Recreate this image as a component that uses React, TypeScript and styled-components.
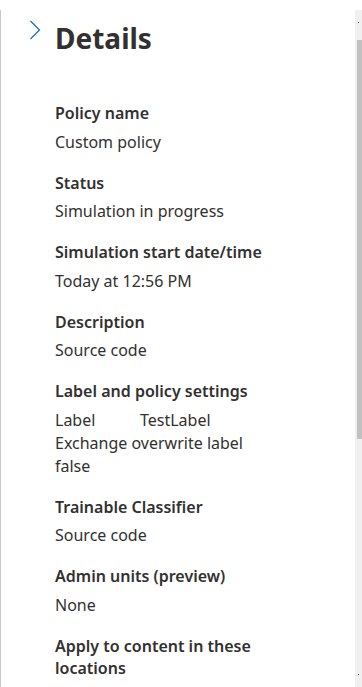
import styled, { createGlobalStyle } from "styled-components";

const Global = createGlobalStyle`
  html, body {
    margin: 0;
    padding: 0;
    background: #ffffff;
  }
  body {
    font-family: "Segoe UI", "Noto Sans", "Open Sans", sans-serif;
    color: #323130;
    overflow: hidden;
  }
`;

const Page = styled.div`
  width: 362px;
  height: 687px;
  padding-top: 10px;
  box-sizing: border-box;
`;

const Panel = styled.div`
  display: flex;
  height: 677px;
  border-left: 1px solid #c8c8c8;
  overflow: hidden;
`;

const Content = styled.div`
  flex: 1;
  min-width: 0;
  display: flex;
  flex-direction: column;
  padding: 0 40px 0 54px;
`;

const Header = styled.div`
  display: flex;
  align-items: flex-start;
  margin-left: -54px;
  padding-top: 8px;
`;

const CollapseButton = styled.button`
  width: 54px;
  height: 24px;
  border: 0;
  background: none;
  padding: 2px 0 0 28px;
  text-align: left;
  cursor: pointer;
`;

const Title = styled.h2`
  margin: 0;
  font-size: 28px;
  font-weight: 700;
  line-height: 40px;
  color: #323130;
`;

const List = styled.dl`
  margin: 44px 0 0 0;
  display: flex;
  flex-direction: column;
  gap: 18px;
`;

const Section = styled.div`
  display: flex;
  flex-direction: column;
  gap: 6.5px;
`;

const Term = styled.dt`
  font-size: 16px;
  font-weight: 600;
  line-height: 22px;
`;

const Value = styled.dd`
  margin: 0;
  font-size: 16px;
  font-weight: 400;
  line-height: 23px;
`;

const Pair = styled.div`
  display: grid;
  grid-template-columns: 85px auto;
`;

const Scrollbar = styled.div`
  width: 7px;
  flex-shrink: 0;
  background: #f0f0f0;
  display: flex;
  flex-direction: column;
  align-items: flex-end;
`;

const Arrow = styled.div<{ $down?: boolean }>`
  height: 30px;
  width: 7px;
  display: flex;
  justify-content: center;
  align-items: ${(p) => (p.$down ? "flex-end" : "flex-start")};
  padding: 12px 0;
  box-sizing: border-box;
  &::after {
    content: "";
    width: 1px;
    height: 1px;
    background: #505050;
  }
`;

const Thumb = styled.div`
  width: 5px;
  height: 399px;
  background: #c1c1c1;
`;

const Spacer = styled.div`
  flex: 1;
`;

function Chevron() {
  return (
    <svg width="12" height="20" viewBox="0 0 12 20" fill="none">
      <path d="M1.5 1 L10.5 10 L1.5 19" stroke="#0f6cbd" strokeWidth="1.2" />
    </svg>
  );
}

const details: { term: string; values: (string | [string, string])[] }[] = [
  { term: "Policy name", values: ["Custom policy"] },
  { term: "Status", values: ["Simulation in progress"] },
  { term: "Simulation start date/time", values: ["Today at 12:56 PM"] },
  { term: "Description", values: ["Source code"] },
  {
    term: "Label and policy settings",
    values: [["Label", "TestLabel"], "Exchange overwrite label", "false"],
  },
  { term: "Trainable Classifier", values: ["Source code"] },
  { term: "Admin units (preview)", values: ["None"] },
  { term: "Apply to content in these locations", values: [] },
];

export default function App() {
  return (
    <Page>
      <Global />
      <Panel>
        <Content>
          <Header>
            <CollapseButton aria-label="Collapse">
              <Chevron />
            </CollapseButton>
            <Title>Details</Title>
          </Header>
          <List>
            {details.map((d) => (
              <Section key={d.term}>
                <Term>{d.term}</Term>
                {d.values.length > 0 && (
                  <Value>
                    {d.values.map((v, i) =>
                      Array.isArray(v) ? (
                        <Pair key={i}>
                          <span>{v[0]}</span>
                          <span>{v[1]}</span>
                        </Pair>
                      ) : (
                        <div key={i}>{v}</div>
                      )
                    )}
                  </Value>
                )}
              </Section>
            ))}
          </List>
        </Content>
        <Scrollbar>
          <Arrow />
          <Thumb />
          <Spacer />
          <Arrow $down />
        </Scrollbar>
      </Panel>
    </Page>
  );
}
